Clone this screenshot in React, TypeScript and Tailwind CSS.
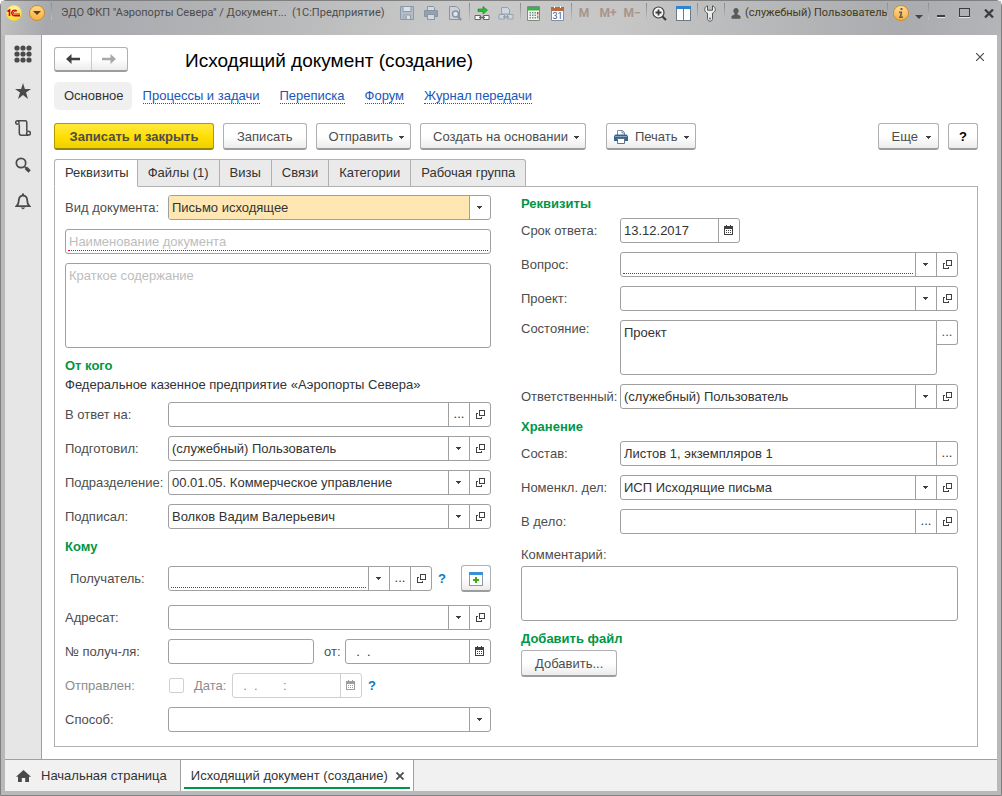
import React, { useState } from 'react';
import clsx from 'clsx';

const Arrow = ({ className }: { className?: string }) => (
  <svg width="6" height="4" viewBox="0 0 6 4" shapeRendering="crispEdges" className={clsx('shrink-0', className)}>
    <path d="M0 1h5v1H4v1H3v1H2V3H1V2H0z" fill="#404040" />
  </svg>
);

const OpenIcon = () => (
  <svg width="10" height="10" viewBox="0 0 10 10" fill="none" stroke="#404040" shapeRendering="crispEdges">
    <path d="M4.5 1.5h5v5h-5z" />
    <path d="M3 4.5H1.5v5h5V8" />
  </svg>
);

const CalendarIcon = () => (
  <svg width="10" height="10" viewBox="0 0 10 10" fill="none" shapeRendering="crispEdges">
    <path d="M0.5 1.5h8v8h-8z" stroke="#404040" />
    <path d="M0 1h9v3H0zM2 0h1v1H2zM6 0h1v1H6z" fill="#404040" />
    <path d="M2 5h1v1H2zM4 5h1v1H4zM6 5h1v1H6zM2 7h1v1H2zM4 7h1v1H4zM6 7h1v1H6z" fill="#404040" />
  </svg>
);

const PrinterIcon = () => (
  <svg width="14" height="14" viewBox="0 0 14 14">
    <path d="M3.5 5V.5h5l2 2V5" fill="#fff" stroke="#7a8a9a" />
    <path d="M8 .5V3h2.500" fill="none" stroke="#7a8a9a" />
    <path d="M1.500 4.500h11L14 6v5h-3V9H3v2H0V6z" fill="#36648f" />
    <path d="M1 6h12v1H1z" fill="#7fa6c8" />
    <path d="M3.500 8.500h7v5h-7z" fill="#fff" stroke="#5d7488" />
  </svg>
);

type AddonKind = 'arrow' | 'dots' | 'open' | 'calendar';

const addonTitles: Record<AddonKind, string> = {
  arrow: 'Выбрать из списка',
  dots: 'Выбрать',
  open: 'Открыть',
  calendar: 'Календарь',
};

function Addon({ kind, disabled }: { kind: AddonKind; disabled?: boolean }) {
  return (
    <button
      type="button"
      aria-label={addonTitles[kind]}
      disabled={disabled}
      className={clsx(
        'flex w-[21px] shrink-0 items-center justify-center border-l pb-px',
        disabled ? 'border-[#d0d0d0]' : 'border-[#a0a0a0]'
      )}
    >
      {kind === 'arrow' && <Arrow />}
      {kind === 'dots' && <span className="leading-4">...</span>}
      {kind === 'open' && <OpenIcon />}
      {kind === 'calendar' && (
        <span className={clsx(disabled && 'opacity-50')}>
          <CalendarIcon />
        </span>
      )}
    </button>
  );
}

interface FieldProps {
  id: string;
  value?: string;
  label?: string;
  placeholder?: string;
  required?: boolean;
  disabled?: boolean;
  addons?: AddonKind[];
  className?: string;
}

function Field({ id, value = '', label, placeholder, required, disabled, addons = [], className }: FieldProps) {
  const [text, setText] = useState(value);

  return (
    <div
      className={clsx(
        'flex h-[25px] min-w-0 rounded-[3px] border bg-white',
        disabled ? 'border-[#d0d0d0] text-[#8c8c8c]' : 'border-[#a0a0a0] text-[#333]',
        className
      )}
    >
      <input
        id={id}
        type="text"
        aria-label={label}
        value={text}
        placeholder={placeholder}
        disabled={disabled}
        onChange={(e) => setText(e.target.value)}
        className={clsx(
          'min-w-0 flex-1 whitespace-pre outline-none placeholder:text-[#bdbdbd]',
          required ? 'mx-0.5 mb-0.5 border-b border-dotted border-[#ff0000] px-px pt-[3px]' : 'px-[3px]'
        )}
      />
      {addons.map((kind) => (
        <Addon key={kind} kind={kind} disabled={disabled} />
      ))}
    </div>
  );
}

function SelectField({ id, options, filled }: { id: string; options: string[]; filled?: boolean }) {
  return (
    <div className="relative flex h-[25px] min-w-0 flex-1 rounded-[3px] border border-[#a0a0a0] bg-white text-[#333]">
      <select
        id={id}
        className={clsx('mr-[21px] min-w-0 flex-1 appearance-none rounded-l-[2px] px-[3px] outline-none', filled && 'bg-[#ffe7b3]')}
      >
        {options.map((o) => (
          <option key={o}>{o}</option>
        ))}
      </select>
      <span className="pointer-events-none absolute inset-y-0 right-0 flex w-[21px] items-center justify-center border-l border-[#a0a0a0] pb-px">
        <Arrow />
      </span>
    </div>
  );
}

interface RowProps {
  id: string;
  label: string;
  wide?: boolean;
  className?: string;
  labelClass?: string;
  children: React.ReactNode;
}

function Row({ id, label, wide, className, labelClass, children }: RowProps) {
  return (
    <div className={clsx('flex items-center', className)}>
      <label htmlFor={id} className={clsx('shrink-0 whitespace-nowrap', wide ? 'w-[103px]' : 'w-[99px]', labelClass)}>
        {label}
      </label>
      {children}
    </div>
  );
}

const Heading = ({ children }: { children: React.ReactNode }) => (
  <h2 className="font-bold text-[#009646]">{children}</h2>
);

function ToolButton({ children, className }: { children: React.ReactNode; className?: string }) {
  return (
    <button
      type="button"
      className={clsx(
        'flex h-[27px] shrink-0 items-center justify-center whitespace-nowrap rounded-[3px] border border-b-2 border-[#b0b0b0] border-b-[#9c9c9c] bg-gradient-to-b from-white from-50% to-[#ececec] pt-px',
        className
      )}
    >
      {children}
    </button>
  );
}

const Sep = () => <span className="ml-0.5 h-[17px] w-px shrink-0 self-start bg-gradient-to-b from-[#8a8a8a] to-[#c0c0c0]" />;

function TitleIcon({ title, children }: { title: string; children: React.ReactNode }) {
  return (
    <button type="button" aria-label={title} className="flex h-5 w-6 shrink-0 items-center justify-center">
      {children}
    </button>
  );
}

function TitleBar() {
  return (
    <header className="flex h-[35px] items-start bg-[linear-gradient(100deg,#c2c2c2_0%,#a7a8ac_5%,#b2b3b5_22%,#c9c9c9_45%,#c6c6c6_62%,#a9abae_90%,#b4b5b8_100%)] pt-0.5 text-[11px] leading-5 text-[#4c4c4c] [font-family:Roboto,'Liberation_Sans',sans-serif]">
      <div className="flex h-5 min-w-0 flex-1 items-center pl-[5px]">
        <svg width="16" height="16" viewBox="0 0 16 16" className="shrink-0">
          <defs>
            <radialGradient id="logo" cx="50%" cy="30%" r="70%">
              <stop offset="0" stopColor="#fffbc0" />
              <stop offset="1" stopColor="#ffd91a" />
            </radialGradient>
          </defs>
          <circle cx="8" cy="8" r="7.700" fill="url(#logo)" />
          <path d="M1.500 6.500L3.500 5v6" fill="none" stroke="#d8000f" strokeWidth="1.600" />
          <path d="M10.800 6.200A2.800 2.800 0 1 0 8.500 10.700H14" fill="none" stroke="#d8000f" strokeWidth="1.400" />
          <path d="M9.800 7.300A1.300 1.300 0 1 0 8.600 9H14" fill="none" stroke="#d8000f" strokeWidth="1" />
        </svg>
        <button type="button" aria-label="Главное меню" className="ml-[7px] mr-1 flex size-4 shrink-0 items-center justify-center rounded-full border border-[#d08c28] bg-gradient-to-b from-[#ffd98a] to-[#f7b040]">
          <svg width="8" height="4" viewBox="0 0 8 4"><path d="M0 0h8L4 4z" fill="#5f4010" /></svg>
        </button>
        <Sep />
        <span className="ml-[9px] whitespace-pre">ЭДО ФКП "Аэропорты Севера" / Документ...  (1С:Предприятие)</span>
      </div>

      <div className="flex h-5 shrink-0 items-center">
        <TitleIcon title="Сохранить">
          <svg width="14" height="14" viewBox="0 0 14 14" fill="none" stroke="#8b99a8">
            <path d="M.5.5h13v13H.5z" fill="#b3bdc8" />
            <path d="M3 .500h8v5H3z" fill="#dce1e6" />
            <path d="M4 9h6.500v4.500H4z" fill="#dce1e6" />
            <path d="M6 10v3" strokeWidth="1.500" />
          </svg>
        </TitleIcon>
        <TitleIcon title="Печать">
          <svg width="14" height="14" viewBox="0 0 14 14" fill="#d5dae0" stroke="#8795a3">
            <path d="M3.500 5V.5h6l1 1V5" />
            <path d="M.5 4.500h13v6H.5z" fill="#93a0ae" />
            <path d="M3.500 8.500h7v5h-7z" />
          </svg>
        </TitleIcon>
        <TitleIcon title="Предварительный просмотр">
          <svg width="14" height="15" viewBox="0 0 14 15" fill="none" stroke="#8795a3">
            <path d="M1.500.5h7l3 3v10h-10z" fill="#ccd2d8" />
            <circle cx="7.500" cy="8" r="3" fill="#dfe4e8" strokeWidth="1.500" />
            <path d="M9.800 10.500l3.500 3.500" strokeWidth="2.200" />
          </svg>
        </TitleIcon>
        <Sep />
        <TitleIcon title="Получить ссылку">
          <svg width="16" height="15" viewBox="0 0 16 15">
            <path d="M1 9.500h5.500v4H1zM9.500 9.500H15v4H9.500z" fill="#fff" stroke="#666" />
            <path d="M5 11.500h6" stroke="#666" strokeWidth="1.500" />
            <path d="M4 3h5V.5l4.500 3.700L9 8V5.500H4z" fill="#22c428" stroke="#14801a" strokeWidth=".6" />
          </svg>
        </TitleIcon>
        <TitleIcon title="Перейти по ссылке">
          <svg width="16" height="15" viewBox="0 0 16 15" fill="#cfd6dd" stroke="#94a1ae">
            <path d="M3.500 8V1.500h6l2 2V8z" />
            <path d="M1 8.500h5.500v4.500H1zM9.500 8.500H15v4.500H9.500z" />
            <path d="M5 11h6" strokeWidth="1.500" />
          </svg>
        </TitleIcon>
        <Sep />
        <TitleIcon title="Калькулятор">
          <svg width="13" height="15" viewBox="0 0 13 15">
            <path d="M.5.5h12v14H.5z" fill="#f3f5f3" stroke="#7d8b80" />
            <path d="M1 1h11v3.500H1z" fill="#35b44a" />
            <path d="M2.500 6h1.500v1.500H2.500zM5 6h1.500v1.500H5zM7.500 6H9v1.500H7.500zM2.500 8.500h1.500V10H2.500zM5 8.500h1.500V10H5zM7.500 8.500H9V10H7.500zM2.500 11h1.500v1.500H2.500zM5 11h1.500v1.500H5zM7.500 11H9v1.500H7.500z" fill="#7c9385" />
            <path d="M10 6h1.500v2.500H10z" fill="#e03a2a" />
            <path d="M10 9.500h1.500v3H10z" fill="#7c9385" />
          </svg>
        </TitleIcon>
        <TitleIcon title="Календарь">
          <svg width="13" height="15" viewBox="0 0 13 15">
            <path d="M.5 1.500h12v13H.5z" fill="#fff" stroke="#87909a" />
            <path d="M0 1h13v4H0z" fill="#b8693f" />
            <path d="M3 0h1v2H3zM9 0h1v2H9z" fill="#fff" />
            <text x="6.500" y="13" textAnchor="middle" fontSize="9" fill="#3f5870">31</text>
          </svg>
        </TitleIcon>
        <Sep />
        <button type="button" className="w-6 text-xs font-bold text-[#a8958a]">M</button>
        <button type="button" className="w-6 text-xs font-bold text-[#a8958a]">M+</button>
        <button type="button" className="w-6 text-xs font-bold text-[#a8958a]">M−</button>
        <Sep />
        <TitleIcon title="Масштаб">
          <svg width="15" height="15" viewBox="0 0 15 15" fill="none" stroke="#3c3c3c">
            <circle cx="6.500" cy="6.500" r="5.500" fill="#f4f4f4" strokeWidth="1.200" />
            <path d="M3.500 6.500h6M6.500 3.500v6" strokeWidth="1.800" />
            <path d="M10.500 10.500l3.500 3.500" strokeWidth="2.200" />
          </svg>
        </TitleIcon>
        <TitleIcon title="Окна">
          <svg width="15" height="15" viewBox="0 0 15 15" shapeRendering="crispEdges">
            <path d="M.5.5h14v14H.5z" fill="#fff" stroke="#6d7a86" />
            <path d="M0 0h15v3H0z" fill="#2f83cf" />
            <path d="M7 3h1v11H7z" fill="#6d7a86" />
          </svg>
        </TitleIcon>
        <Sep />
        <TitleIcon title="Сервис и настройки">
          <svg width="12" height="17" viewBox="0 0 12 17">
            <path d="M3.500.8v4.400h5V.8C10.500 1.500 11.300 3 11.300 4.500c0 1.800-1 3-2.800 3.700v5.500c0 3.300-5 3.300-5 0V8.200C1.700 7.500.7 6.300.7 4.500.7 3 1.500 1.500 3.500.8z" fill="#ececec" stroke="#555" />
            <circle cx="6" cy="13.500" r=".9" fill="#555" />
          </svg>
        </TitleIcon>
        <Sep />
        <button type="button" className="flex w-[160px] items-center pl-[6px] text-[#433a1c]">
          <svg width="10" height="11" viewBox="0 0 10 11" className="mr-1 shrink-0">
            <path d="M5 0a2.700 2.900 0 0 1 1.500 5.300V6.500L9.500 8v2.700H.5V8l3-1.500V5.300A2.700 2.900 0 0 1 5 0z" fill="#5a5a5a" />
          </svg>
          <span className="whitespace-nowrap">(служебный) Пользователь</span>
        </button>
        <Sep />
        <button type="button" aria-label="Справка" className="ml-[5px] flex size-4 items-center justify-center rounded-full border border-[#cf8f2c] bg-gradient-to-b from-[#ffdc90] to-[#f5b040]">
          <svg width="6" height="10" viewBox="0 0 6 10" fill="#6b6250">
            <path d="M2.500 0h2v2h-2zM1 3.500h3.300L3.500 8.500H5V10H1V8.500h.8L2.300 5H1z" />
          </svg>
        </button>
        <svg width="8" height="4" viewBox="0 0 8 4" className="ml-[6px] mr-[3px] mt-[7px]"><path d="M0 0h8L4 4z" fill="#444" /></svg>
        <Sep />
        <TitleIcon title="Свернуть">
          <svg width="8" height="10" viewBox="0 0 8 10" shapeRendering="crispEdges">
            <path d="M0 7h8v2H0z" fill="#3d3d3d" />
            <path d="M0 9h8v1H0z" fill="#e4e4e4" />
          </svg>
        </TitleIcon>
        <TitleIcon title="Развернуть">
          <svg width="12" height="12" viewBox="0 0 12 12" fill="none" shapeRendering="crispEdges">
            <path d="M.5 1.500h10v8H.5z" stroke="#3d3d3d" />
            <path d="M0 1h11v1H0z" fill="#3d3d3d" />
            <path d="M0 10h11v1H0z" fill="#e4e4e4" />
          </svg>
        </TitleIcon>
        <TitleIcon title="Закрыть">
          <svg width="10" height="9" viewBox="0 0 10 9" stroke="#3d3d3d" strokeWidth="2.300">
            <path d="M1 .500l8 8M9 .500l-8 8" />
          </svg>
        </TitleIcon>
      </div>
    </header>
  );
}

function SideBar() {
  const cell = 'flex h-[37px] w-full items-center justify-center';
  return (
    <nav className="flex w-[37px] shrink-0 flex-col border-r border-[#a0a0a0] bg-[#e6e6e6]">
      <button type="button" aria-label="Меню функций" className={cell}>
        <svg width="18" height="18" viewBox="0 0 18 18" fill="#4a4a4a">
          {[3, 9, 15].map((y) => [3, 9, 15].map((x) => <circle key={`${x}-${y}`} cx={x} cy={y} r="2.600" />))}
        </svg>
      </button>
      <button type="button" aria-label="Избранное" className={cell}>
        <svg width="16" height="16" viewBox="0 0 16 16" fill="#4a4a4a">
          <path d="M8 0l1.900 6H16l-5 3.600L13 16l-5-3.900L3 16l2-6.400L0 6h6.100z" />
        </svg>
      </button>
      <button type="button" aria-label="История" className={cell}>
        <svg width="16" height="16" viewBox="0 0 16 16" fill="none" stroke="#4a4a4a" strokeWidth="1.500">
          <path d="M2.500.8h7.700c1 0 1.600.7 1.600 1.600v8.600" />
          <path d="M4.300 4.200V13c0 1.300.8 2.200 2 2.200h7" />
          <circle cx="2.400" cy="2.500" r="1.700" />
          <circle cx="13.500" cy="13.200" r="1.900" />
        </svg>
      </button>
      <button type="button" aria-label="Поиск" className={cell}>
        <svg width="16" height="16" viewBox="0 0 16 16" fill="none" stroke="#4a4a4a">
          <circle cx="6" cy="6" r="4.700" strokeWidth="1.700" />
          <path d="M9.300 9.500l2 1.500" strokeWidth="1.500" />
          <path d="M10.800 10.800l3.800 3.600" strokeWidth="3.400" />
        </svg>
      </button>
      <button type="button" aria-label="Уведомления" className={cell}>
        <svg width="16" height="17" viewBox="0 0 16 17" fill="none" stroke="#4a4a4a" strokeWidth="1.800">
          <path d="M1.500 13.200h13c-2-1.700-2.300-3-2.300-6 0-2.800-1.700-4.700-4.200-4.700S3.800 4.400 3.800 7.200c0 3-.3 4.300-2.300 6z" />
          <path d="M8 .5v2" strokeWidth="2" />
          <path d="M5.500 14.500h5L8 16.500z" fill="#4a4a4a" stroke="none" />
        </svg>
      </button>
    </nav>
  );
}

const links = ['Процессы и задачи', 'Переписка', 'Форум', 'Журнал передачи'];
const tabs = ['Реквизиты', 'Файлы (1)', 'Визы', 'Связи', 'Категории', 'Рабочая группа'];

function LeftColumn() {
  return (
    <div className="flex min-w-0 flex-col gap-[9px]">
      <Row wide id="kind" label="Вид документа:">
        <SelectField id="kind" filled options={['Письмо исходящее']} />
      </Row>
      <Field id="name" label="Наименование документа" placeholder="Наименование документа" required />
      <textarea
        aria-label="Краткое содержание"
        placeholder="Краткое содержание"
        className="h-[85px] resize-none rounded-[3px] border border-[#a0a0a0] px-[3px] py-1 outline-none placeholder:text-[#bdbdbd]"
      />
      <div className="leading-[18px]">
        <Heading>От кого</Heading>
        <p className="h-[18px] whitespace-nowrap leading-5 text-[#333]">Федеральное казенное предприятие «Аэропорты Севера»</p>
      </div>
      <Row wide id="reply" label="В ответ на:">
        <Field id="reply" addons={['dots', 'open']} className="flex-1" />
      </Row>
      <Row wide id="prepared" label="Подготовил:">
        <Field id="prepared" value="(служебный) Пользователь" addons={['arrow', 'open']} className="flex-1" />
      </Row>
      <Row wide id="department" label="Подразделение:">
        <Field id="department" value="00.01.05. Коммерческое управление" addons={['arrow', 'open']} className="flex-1" />
      </Row>
      <Row wide id="signed" label="Подписал:">
        <Field id="signed" value="Волков Вадим Валерьевич" addons={['arrow', 'open']} className="flex-1" />
      </Row>
      <div className="leading-[18px]">
        <Heading>Кому</Heading>
      </div>
      <Row wide id="recipient" label="Получатель:" className="mb-1" labelClass="pl-[5px]">
        <Field id="recipient" required addons={['arrow', 'dots', 'open']} className="flex-1" />
        <button type="button" aria-label="Подсказка" className="ml-[6px] w-[23px] text-left font-bold text-[#0a78c2]">?</button>
        <ToolButton className="w-[30px]">
          <svg width="14" height="14" viewBox="0 0 14 14" shapeRendering="crispEdges">
            <path d="M.5.5h13v13H.5z" fill="#fff" stroke="#8a9aa8" />
            <path d="M0 0h14v3H0z" fill="#3a8fdc" />
            <path d="M6 5h2v2h2v2H8v2H6V9H4V7h2z" fill="#3aac1a" />
          </svg>
        </ToolButton>
      </Row>
      <Row wide id="addressee" label="Адресат:">
        <Field id="addressee" addons={['arrow', 'open']} className="flex-1" />
      </Row>
      <Row wide id="number" label="№ получ-ля:">
        <Field id="number" className="flex-1" />
        <label htmlFor="numberDate" className="w-[31px] pl-[10px]">от:</label>
        <Field id="numberDate" value="  .  ." addons={['calendar']} className="flex-1" />
      </Row>
      <Row wide id="sent" label="Отправлен:" labelClass="text-[#8c8c8c]">
        <input id="sent" type="checkbox" disabled className="ml-px size-[15px] appearance-none rounded-[2px] border border-[#d0d0d0] bg-white" />
        <label htmlFor="sentDate" className="w-12 pl-[10px] text-[#8c8c8c]">Дата:</label>
        <Field id="sentDate" value="  .  .       :" disabled addons={['calendar']} className="w-[130px]" />
        <button type="button" aria-label="Подсказка" className="ml-[6px] font-bold text-[#0a78c2]">?</button>
      </Row>
      <Row wide id="method" label="Способ:">
        <SelectField id="method" options={['']} />
      </Row>
    </div>
  );
}

function RightColumn() {
  return (
    <div className="flex min-w-0 flex-col gap-[9px]">
      <div className="h-[14px] leading-[18px]">
        <Heading>Реквизиты</Heading>
      </div>
      <Row id="due" label="Срок ответа:">
        <Field id="due" value="13.12.2017" addons={['calendar']} className="w-[120px]" />
      </Row>
      <Row id="question" label="Вопрос:">
        <Field id="question" required addons={['arrow', 'open']} className="flex-1" />
      </Row>
      <Row id="project" label="Проект:">
        <Field id="project" addons={['arrow', 'open']} className="flex-1" />
      </Row>
      <Row id="state" label="Состояние:" labelClass="self-start leading-[18px]">
        <textarea
          id="state"
          defaultValue="Проект"
          className="h-[55px] min-w-0 flex-1 resize-none rounded-[3px] rounded-tr-none border border-[#a0a0a0] px-[3px] py-1 text-[#333] outline-none"
        />
        <button
          type="button"
          aria-label="Выбрать"
          className="flex h-[25px] w-[21px] items-center justify-center self-start rounded-r-[3px] border border-l-0 border-[#a0a0a0] pb-px"
        >
          <span className="leading-4">...</span>
        </button>
      </Row>
      <Row id="responsible" label="Ответственный:">
        <Field id="responsible" value="(служебный) Пользователь" addons={['arrow', 'open']} className="flex-1" />
      </Row>
      <div className="h-[14px] leading-[18px]">
        <Heading>Хранение</Heading>
      </div>
      <Row id="parts" label="Состав:">
        <Field id="parts" value="Листов 1, экземпляров 1" addons={['dots']} className="flex-1" />
      </Row>
      <Row id="nomenclature" label="Номенкл. дел:">
        <Field id="nomenclature" value="ИСП Исходящие письма" addons={['arrow', 'open']} className="flex-1" />
      </Row>
      <Row id="folder" label="В дело:">
        <Field id="folder" addons={['dots', 'open']} className="flex-1" />
      </Row>
      <div className="flex flex-col">
        <label htmlFor="comment" className="leading-[23px]">Комментарий:</label>
        <textarea id="comment" className="h-[55px] resize-none rounded-[3px] border border-[#a0a0a0] px-[3px] py-1 outline-none" />
      </div>
      <div className="flex flex-col items-start gap-0.5 leading-[18px]">
        <Heading>Добавить файл</Heading>
        <ToolButton className="px-[13px]">Добавить...</ToolButton>
      </div>
    </div>
  );
}

export default function App() {
  const [activeTab, setActiveTab] = useState(0);

  return (
    <div className="flex min-h-screen flex-col rounded-t-md border border-[#808080] bg-[#b9b9bb] text-[13px] leading-4 text-[#4d4d4d] [font-family:'Liberation_Sans',Arial,sans-serif]">
      <TitleBar />
      <div className="mx-1 -mt-px mb-1 flex flex-1 flex-col">
        <div className="flex flex-1">
          <SideBar />
          <main className="flex min-w-0 flex-1 flex-col bg-white pb-3 pl-3 pr-[19px] pt-3">
            <div className="flex items-center">
              <div className="flex h-[25px] w-[74px] shrink-0 rounded-[3px] border border-b-2 border-[#b0b0b0] border-b-[#9c9c9c] bg-gradient-to-b from-white from-50% to-[#ececec]">
                <button type="button" aria-label="Назад" className="flex flex-1 items-center justify-center border-r border-[#c8c8c8]">
                  <svg width="14" height="10" viewBox="0 0 14 10" fill="#404040"><path d="M0 5l5.500-5v3.700H14v2.600H5.500V10z" /></svg>
                </button>
                <button type="button" aria-label="Вперед" className="flex flex-1 items-center justify-center">
                  <svg width="14" height="10" viewBox="0 0 14 10" fill="#a8a8a8"><path d="M14 5L8.500 0v3.700H0v2.600h8.500V10z" /></svg>
                </button>
              </div>
              <h1 className="ml-[57px] h-[25px] flex-1 whitespace-nowrap text-[19px] leading-[27px] text-black">Исходящий документ (создание)</h1>
              <button type="button" aria-label="Закрыть" className="-mr-[7px] mb-[5px] flex size-[10px] items-center justify-center">
                <svg width="8" height="8" viewBox="0 0 8 8" stroke="#4d4d4d" strokeWidth="1.200"><path d="M0 0l8 8M8 0l-8 8" /></svg>
              </button>
            </div>

            <nav className="mt-[10px] flex h-7 items-center">
              <span className="mr-[11px] flex h-7 items-center rounded-[5px] bg-[#f0f0f0] pl-[10px] pr-2 text-[#333]">Основное</span>
              <div className="flex gap-5">
                {links.map((link) => (
                  <a key={link} href="#" className="border-b border-dotted border-[#1a56b8] leading-[15px] text-[#1a56b8]">
                    {link}
                  </a>
                ))}
              </div>
            </nav>

            <div className="mt-[13px] flex items-center gap-[9px]">
              <button
                type="button"
                className="h-[27px] w-40 rounded-[3px] border border-b-2 border-[#b09a00] border-b-[#988400] bg-gradient-to-b from-[#ffe838] via-[#ffe000] to-[#f0d000] pt-px font-bold"
              >
                Записать и закрыть
              </button>
              <ToolButton className="px-[13px]">Записать</ToolButton>
              <ToolButton className="pl-3 pr-[5px]">Отправить<Arrow className="ml-[6px]" /></ToolButton>
              <ToolButton className="pl-3 pr-[5px]">Создать на основании<Arrow className="ml-[6px]" /></ToolButton>
              <ToolButton className="ml-[11px] pl-[7px] pr-[5px]">
                <PrinterIcon />
                <span className="ml-[7px]">Печать</span>
                <Arrow className="ml-[6px]" />
              </ToolButton>
              <ToolButton className="ml-auto pl-[13px] pr-[6px]">Еще<Arrow className="ml-2" /></ToolButton>
              <ToolButton className="w-[30px] font-bold text-black">?</ToolButton>
            </div>

            <div role="tablist" className="z-10 mt-[9px] flex h-7">
              {tabs.map((tab, i) => (
                <button
                  key={tab}
                  type="button"
                  role="tab"
                  aria-selected={i === activeTab}
                  onClick={() => setActiveTab(i)}
                  className={clsx(
                    'border-y border-r border-[#b0b0b0] px-[10px] text-[#333] first:rounded-tl-[3px] first:border-l first:pr-2 last:rounded-tr-[3px]',
                    i === activeTab ? 'border-b-white bg-white' : 'bg-[#eaeaea]'
                  )}
                >
                  {tab}
                </button>
              ))}
            </div>
            <div className="-mt-px grid flex-1 grid-cols-[426fr_437fr] items-start gap-x-[30px] border border-[#b0b0b0] pb-[14px] pl-[10px] pr-[19px] pt-2">
              <LeftColumn />
              <RightColumn />
            </div>
          </main>
        </div>

        <footer className="flex h-8 border-t border-[#a0a0a0] bg-[#f1f1f1] text-[#333]">
          <button type="button" className="flex items-center border-r border-[#a0a0a0] pl-[11px] pr-[13px]">
            <svg width="15" height="12" viewBox="0 0 15 12" fill="#4a4a4a" className="mr-[10px]">
              <path d="M7.500 0L15 6.800h-2V12H9.200V8H5.800v4H2V6.800H0z" />
            </svg>
            Начальная страница
          </button>
          <div className="flex border-r border-[#a0a0a0] bg-white px-[3px] pb-0.5">
            <div className="flex items-center border-b-2 border-[#009646] pl-[7px] pr-[6px] pt-1">
              Исходящий документ (создание)
              <button type="button" aria-label="Закрыть вкладку" className="ml-2">
                <svg width="8" height="8" viewBox="0 0 8 8" stroke="#4d4d4d" strokeWidth="1.800"><path d="M.5.5l7 7M7.500.5l-7 7" /></svg>
              </button>
            </div>
          </div>
        </footer>
      </div>
    </div>
  );
}
